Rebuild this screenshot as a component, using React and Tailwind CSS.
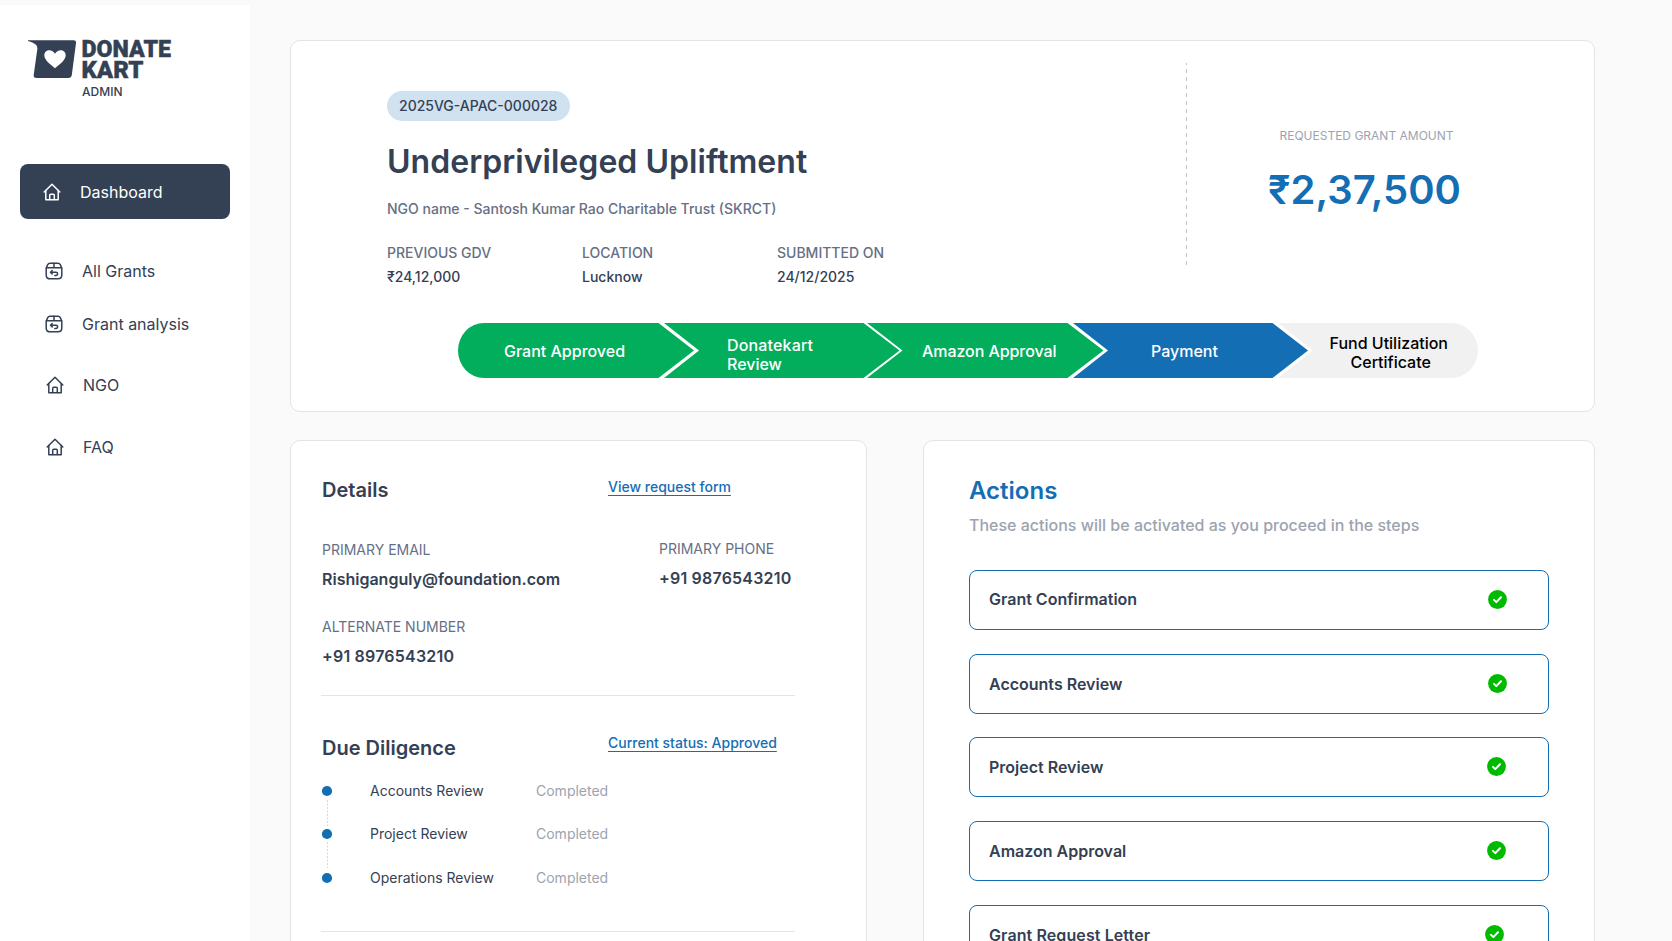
import React from 'react';

const NAV_ITEMS = [
  { label: 'All Grants', icon: 'box', className: 'mt-[35px] h-[33px] pl-[44px] gap-[18px]' },
  { label: 'Grant analysis', icon: 'box', className: 'mt-[20px] h-[33px] pl-[44px] gap-[18px]' },
  { label: 'NGO', icon: 'home', className: 'mt-[28px] h-[33px] pl-[46px] gap-[19px]' },
  { label: 'FAQ', icon: 'home', className: 'mt-[29px] h-[33px] pl-[46px] gap-[19px]' },
];

const SUMMARY = [
  { label: 'PREVIOUS GDV', value: '₹24,12,000' },
  { label: 'LOCATION', value: 'Lucknow' },
  { label: 'SUBMITTED ON', value: '24/12/2025' },
];

const REVIEWS = [
  { name: 'Accounts Review', className: 'mb-[23px]' },
  { name: 'Project Review', className: 'mb-[24px]' },
  { name: 'Operations Review', className: '' },
];

const ACTIONS = [
  { label: 'Grant Confirmation', text: 'mb-[2px]', check: 'mb-[2px] mr-[41px]' },
  { label: 'Accounts Review', text: '', check: 'mb-px mr-[41px]' },
  { label: 'Project Review', text: '', check: 'mb-[2px] mr-[42px]' },
  { label: 'Amazon Approval', text: '', check: 'mb-[2px] mr-[42px]' },
  { label: 'Grant Request Letter', text: 'tracking-[0.1px]', check: 'mb-px mr-[44px]' },
];

const HomeIcon = () => (
  <svg className="w-[18px] h-[18px] shrink-0" viewBox="0 0 18 18" fill="none" stroke="currentColor" strokeWidth="1.5" strokeLinecap="round" strokeLinejoin="round">
    <path d="M1.2 9 9 1.2 16.800 9" />
    <path d="M2.800 7.500V16.700H15.200V7.500" />
    <path d="M6.700 16.500V12.300Q6.700 11.300 7.700 11.300H10.300Q11.300 11.300 11.300 12.300V16.500" />
  </svg>
);

const BoxIcon = () => (
  <svg className="w-[20px] h-[18px] shrink-0" viewBox="0 0 20 18" fill="none" stroke="currentColor" strokeWidth="1.5" strokeLinecap="round" strokeLinejoin="round">
    <path d="M2.200 6.300 3.700 2.600Q4.400 1.200 6 1.200H14Q15.600 1.200 16.300 2.600L17.800 6.300V13Q17.800 16.800 14 16.800H6Q2.200 16.800 2.200 13Z" />
    <path d="M2.400 5.800H17.600M10 1.200V5.800" />
    <path d="M8.200 8.500 6.500 10.200 8.200 11.900M6.800 10.200H12Q13.600 10.200 13.600 11.800T12 13.400H10.800" />
  </svg>
);

const CheckIcon = ({ className }) => (
  <svg className={`w-[19px] h-[19px] shrink-0 ${className}`} viewBox="0 0 19 19" fill="none">
    <circle cx="9.500" cy="9.500" r="9.400" fill="#00ba00" />
    <path d="M6 9.900 8.300 12.100 13 7.200" stroke="#fff" strokeWidth="2" strokeLinecap="round" strokeLinejoin="round" />
  </svg>
);

const Logo = () => (
  <div className="flex items-start ml-[28px] mt-[29px] text-[#344054]">
    <svg className="mt-[6px] w-[49px] h-[39px]" viewBox="0 0 49 39">
      <path d="M0 .2H45.500Q48.400 .2 48 3L43.800 35Q43.300 38 40.300 38H8.500Q5.400 38 5.700 35L9.400 8.500Q10 3.500 0 1Z" fill="currentColor" />
      <path d="M27 28.200C22.500 24.500 16.300 20 16.300 15.200C16.300 9.600 24 8 27 13.800C30 8 37.700 9.600 37.700 15.200C37.700 20 31.500 24.500 27 28.200Z" fill="#fff" />
    </svg>
    <svg className="ml-[5px] w-[100px] h-[66px]" viewBox="0 0 100 66" fill="currentColor">
      <g fontFamily="Roboto, sans-serif" fontWeight="900" fontSize="23.500" stroke="currentColor" strokeWidth="0.400">
        <text x="-0.500" y="23" textLength="89.500" lengthAdjust="spacingAndGlyphs">DONATE</text>
        <text x="-0.500" y="44" textLength="62" lengthAdjust="spacingAndGlyphs">KART</text>
      </g>
      <text x="0" y="62" fontFamily="Inter, sans-serif" fontWeight="500" fontSize="12" textLength="40.500">ADMIN</text>
    </svg>
  </div>
);

const Sidebar = () => (
  <aside className="mt-[5px] w-[250px] h-[936px] shrink-0 bg-white text-[#344054] flex flex-col">
    <Logo />
    <nav className="mt-[64px] flex flex-col text-[16px]">
      <a className="mx-[20px] w-[210px] h-[55px] pl-[23px] rounded-lg bg-[#344054] text-white flex items-center gap-[19px]">
        <HomeIcon />
        <span>Dashboard</span>
      </a>
      {NAV_ITEMS.map((item) => (
        <a key={item.label} className={`flex items-center ${item.className}`}>
          {item.icon === 'home' ? <HomeIcon /> : <BoxIcon />}
          <span>{item.label}</span>
        </a>
      ))}
    </nav>
  </aside>
);

const Stepper = () => (
  <svg className="ml-[167px] mt-[38px] w-[1021px] h-[55px]" viewBox="0 0 1021 55" fontFamily="Inter, sans-serif" fontSize="16" fontWeight="500" fill="#fff">
    <path d="M26 0H200.500L236 27.500 200.500 55H26A26 27.500 0 0 1 26 0Z" fill="#02ae5c" />
    <path d="M206 0H405.500L441.500 27.500 405.500 55H206L241 27.500Z" fill="#02ae5c" />
    <path d="M409 0H609.500L645.500 27.500 609.500 55H409L444.500 27.500Z" fill="#02ae5c" />
    <path d="M615 0H814.500L850 27.500 814.500 55H615L650 27.500Z" fill="#146eb4" />
    <path d="M820 0H993A27 27.500 0 0 1 993 55H820L855 27.500Z" fill="#f1f1f1" />
    <text x="46" y="34">Grant Approved</text>
    <text x="269" y="28" textLength="86">Donatekart</text>
    <text x="269" y="47">Review</text>
    <text x="464" y="34" textLength="134.500">Amazon Approval</text>
    <text x="693" y="34">Payment</text>
    <text x="871.500" y="26" fill="#000">Fund Utilization</text>
    <text x="892.500" y="45" fill="#000">Certificate</text>
  </svg>
);

const SummaryCard = () => (
  <section className="h-[372px] bg-white border border-[#e4e4e4] rounded-[10px] flex flex-col">
    <div className="flex h-[244px]">
      <div className="w-[799px] pl-[96px] pt-[50px] flex flex-col items-start">
        <span className="h-[30px] pl-[12px] pr-[13px] rounded-full bg-[#d0e2f0] text-[#344054] text-[14px] font-medium leading-[30px]">
          2025VG-APAC-000028
        </span>
        <h1 className="mt-[21px] text-[32px] leading-[40px] font-semibold tracking-[0.04px] text-[#344054]">Underprivileged Upliftment</h1>
        <p className="mt-[17px] text-[14px] leading-[20px] font-medium text-[#667085]">
          NGO name - Santosh Kumar Rao Charitable Trust (SKRCT)
        </p>
        <div className="mt-[24px] flex">
          {SUMMARY.map((item) => (
            <div key={item.label} className="w-[195px] text-[14px] leading-[20px] font-medium">
              <div className="text-[#667085]">{item.label}</div>
              <div className="mt-[4px] text-[#344054]">{item.value}</div>
            </div>
          ))}
        </div>
      </div>
      <svg className="w-px h-[204px] mt-[22px] ml-[96px] shrink-0" viewBox="0 0 1 204">
        <path d="M.5 0V204" stroke="#c4c4c4" strokeDasharray="4 4" strokeDashoffset="2" />
      </svg>
      <div className="flex-1 flex flex-col items-center pr-[48px]">
        <div className="mt-[87px] text-[12px] leading-[16px] text-[#9ca3af]">REQUESTED GRANT AMOUNT</div>
        <div className="mt-[22px] pr-[4px] text-[40px] leading-[48px] font-semibold text-[#146eb4]">₹2,37,500</div>
      </div>
    </div>
    <Stepper />
  </section>
);

const Field = ({ label, value, className = '', valueClass = '' }) => (
  <div className={className}>
    <div className="text-[14px] leading-[20px] text-[#667085]">{label}</div>
    <div className={`mt-[7px] text-[16px] leading-[24px] font-semibold text-[#344054] ${valueClass}`}>{value}</div>
  </div>
);

const DetailsCard = () => (
  <section className="w-[577px] h-[600px] bg-white border border-[#e4e4e4] rounded-[10px] pl-[31px] pt-[34px]">
    <div className="flex">
      <h2 className="w-[286px] text-[20px] leading-[30px] font-semibold text-[#344054]">Details</h2>
      <a className="mt-[2px] text-[14px] leading-[20px] font-medium text-[#146eb4] underline underline-offset-[3px]">View request form</a>
    </div>
    <div className="mt-[34px] flex">
      <Field className="w-[337px] pt-[1px]" label="PRIMARY EMAIL" value="Rishiganguly@foundation.com" />
      <Field label="PRIMARY PHONE" value="+91 9876543210" valueClass="tracking-[0.2px]" />
    </div>
    <Field className="mt-[26px]" label="ALTERNATE NUMBER" value="+91 8976543210" valueClass="tracking-[0.2px]" />
    <hr className="mt-[27px] -ml-px w-[474px] border-[#e4e4e4]" />
    <div className="mt-[37px] flex">
      <h2 className="w-[286px] text-[20px] leading-[30px] font-semibold text-[#344054]">Due Diligence</h2>
      <a className="text-[14px] leading-[20px] font-medium text-[#146eb4] underline underline-offset-[3px]">Current status: Approved</a>
    </div>
    <div className="mt-[22px] flex">
      <svg className="w-[11px] h-[100px] shrink-0" viewBox="0 0 11 100">
        <g fill="#146eb4">
          <circle cx="5" cy="6" r="5.100" />
          <circle cx="5" cy="49" r="5.100" />
          <circle cx="5" cy="93" r="5.100" />
        </g>
        <path d="M5.500 15V41M5.500 57V83" stroke="#b9d4e9" strokeWidth="0.800" strokeDasharray="2 1.500" />
      </svg>
      <div className="ml-[37px] -mt-[4px] text-[14px] leading-[20px]">
        {REVIEWS.map((review) => (
          <div key={review.name} className={`flex ${review.className}`}>
            <span className="w-[166px] text-[#344054]">{review.name}</span>
            <span className="text-[#9ca3af]">Completed</span>
          </div>
        ))}
      </div>
    </div>
    <hr className="mt-[43px] -ml-px w-[474px] border-[#e4e4e4]" />
  </section>
);

const ActionsCard = () => (
  <section className="w-[672px] h-[600px] bg-white border border-[#e4e4e4] rounded-[10px] pl-[45px] pt-[34px]">
    <h2 className="text-[24px] leading-[32px] font-semibold text-[#146eb4]">Actions</h2>
    <p className="mt-[6px] text-[16px] leading-[24px] font-medium text-[#9ca3af]">These actions will be activated as you proceed in the steps</p>
    <div className="mt-[33px] w-[580px] flex flex-col gap-[23.7px]">
      {ACTIONS.map((action) => (
        <button key={action.label} className="h-[60px] shrink-0 pl-[19px] border border-[#146eb4] rounded-lg flex items-center justify-between">
          <span className={`text-[16px] font-semibold text-[#344054] ${action.text}`}>{action.label}</span>
          <CheckIcon className={action.check} />
        </button>
      ))}
    </div>
  </section>
);

export default function App() {
  return (
    <div className="w-[1672px] h-[941px] overflow-hidden bg-[#fafafa] flex font-['Inter',sans-serif]">
      <Sidebar />
      <main className="ml-[40px] pt-[40px] w-[1305px]">
        <SummaryCard />
        <div className="mt-[28px] flex justify-between">
          <DetailsCard />
          <ActionsCard />
        </div>
      </main>
    </div>
  );
}
